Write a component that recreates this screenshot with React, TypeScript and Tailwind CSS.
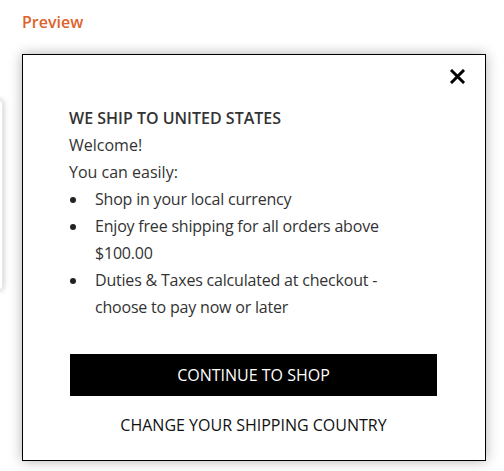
import React from 'react';

const items = [
    'Shop in your local currency',
    'Enjoy free shipping for all orders above $100.00',
    'Duties & Taxes calculated at checkout - choose to pay now or later',
];

export default function App() {
    return (
        <div className="relative w-[504px] h-[471px] bg-white overflow-hidden" style={{ fontFamily: '"Open Sans", sans-serif' }}>
            {/* card behind the modal, only its edge is visible */}
            <div className="absolute left-[-20px] top-[100px] w-[23px] h-[190px] bg-white border border-gray-200 rounded-[3px] shadow-[0_0_6px_rgba(0,0,0,0.25)]" />

            <div className="pl-[22px] pr-[18px] pt-[11px]">
                <p className="text-[16px] font-semibold text-[#e0622a] leading-[22px]">Preview</p>

                <div className="relative mt-[21px] h-[407px] border border-black bg-white shadow-[0_0_12px_rgba(0,0,0,0.3)]">
                    <button className="absolute right-[19px] top-[12px] w-[18px] h-[18px] flex items-center justify-center">
                        <svg width="15" height="15" viewBox="0 0 15 15">
                            <path d="M2 2 L13 13 M13 2 L2 13" stroke="#000" strokeWidth="3" strokeLinecap="square" />
                        </svg>
                    </button>

                    <div className="pl-[46px] pt-[50px] text-[#333] text-[16px] leading-[27px]">
                        <div className="w-[364px]">
                            <h2 className="font-semibold text-[16px]">WE SHIP TO UNITED STATES</h2>
                            <p>Welcome!</p>
                            <p>You can easily:</p>
                            <ul className="tracking-[-0.2px]">
                                {items.map(item => (
                                    <li key={item} className="flex">
                                        <span className="w-[26px] shrink-0 flex justify-start pl-[1px] pt-[11px]">
                                            <span className="block w-[6px] h-[6px] rounded-full bg-[#222]" />
                                        </span>
                                        <span>{item}</span>
                                    </li>
                                ))}
                            </ul>
                        </div>

                        <div className="w-[367px] ml-[1px]">
                            <button className="mt-[33px] w-full h-[42px] bg-black text-white text-[16px]">
                                CONTINUE TO SHOP
                            </button>
                            <p className="mt-[16px] text-center text-[#111]">CHANGE YOUR SHIPPING COUNTRY</p>
                        </div>
                    </div>
                </div>
            </div>
        </div>
    );
}
